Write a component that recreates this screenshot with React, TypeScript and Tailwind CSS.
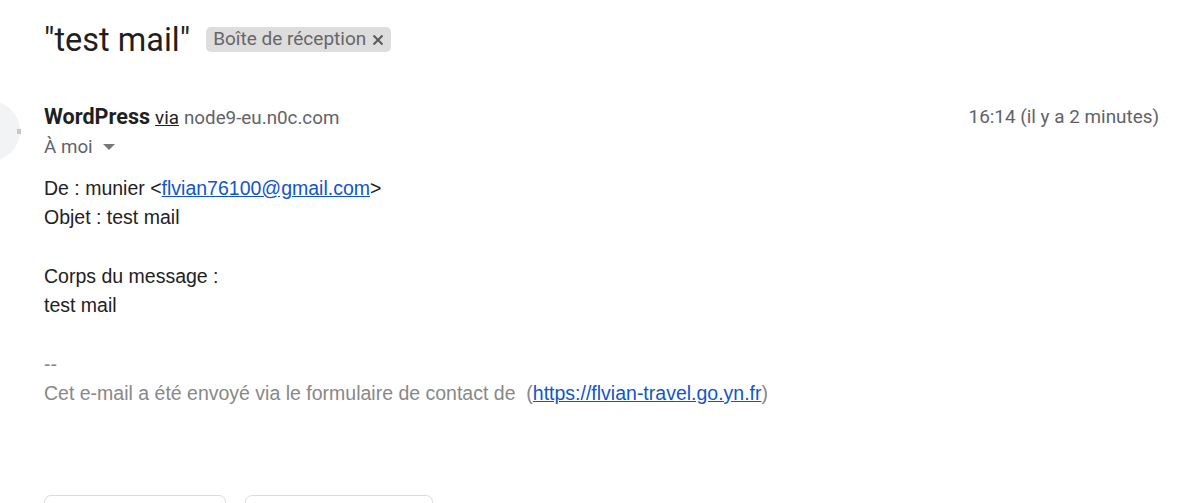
import React from 'react';

export default function App() {
  return (
    <div className="relative h-[503px] w-full overflow-hidden bg-white font-['Roboto',sans-serif]">
      <div className="pl-[44px] pr-[32px] pt-[20px]">
        {/* subject + label */}
        <div className="flex items-center gap-[16px]">
          <h1 className="text-[32.5px] leading-[40px] font-normal text-[#1f1f1f]">"test mail"</h1>
          <span className="mt-[-1px] flex h-[25px] items-center gap-[6px] rounded-[5px] bg-[#dddddd] pl-[7px] pr-[7px] text-[19px] text-[#666666]">
            Boîte de réception
            <svg width="12" height="12" viewBox="0 0 12 12" className="mt-[1px]">
              <path d="M1.5 1.5 L10.5 10.5 M10.5 1.5 L1.5 10.5" stroke="#5a5a5a" strokeWidth="2" />
            </svg>
          </span>
        </div>

        {/* message */}
        <div className="mt-[45px] flex">
          <div className="ml-[-84px] mr-[24px] mt-[-4px] flex h-[60px] w-[60px] shrink-0 items-center justify-end rounded-full bg-[#f1f3f4]">
            <div className="mr-[-1px] h-[5px] w-[4px] bg-[#c8c8c8]" />
          </div>
          <div className="flex-1">
            <div className="flex items-start justify-between">
              <div>
                <div className="flex items-baseline gap-[5px] leading-[24px]">
                  <span className="text-[21.6px] font-bold text-[#1f1f1f]">WordPress</span>
                  <span className="text-[18.8px] text-[#222] underline">via</span>
                  <span className="text-[18.8px] text-[#5f6368]">node9-eu.n0c.com</span>
                </div>
                <div className="mt-[5px] flex items-center gap-[10px] text-[18.8px] leading-[24px] text-[#5f6368]">
                  À moi
                  <svg width="12" height="6" viewBox="0 0 12 6">
                    <path d="M0 0 L12 0 L6 6 Z" fill="#777" />
                  </svg>
                </div>
              </div>
              <span className="text-[18.9px] leading-[24px] text-[#5f6368]">16:14 (il y a 2 minutes)</span>
            </div>

            <div className="mt-[15px] font-['Liberation_Sans',Arial,sans-serif] text-[19.5px] leading-[29.25px] text-[#222222]">
              <div>
                De : munier &lt;<a className="text-[#1155cc] underline">flvian76100@gmail.com</a>&gt;
              </div>
              <div>Objet : test mail</div>
              <div className="h-[29.25px]" />
              <div>Corps du message :</div>
              <div>test mail</div>
              <div className="h-[29.25px]" />
              <div className="text-[#888888]">--</div>
              <div className="whitespace-pre text-[#888888]">
                Cet e-mail a été envoyé via le formulaire de contact de  (
                <a className="text-[#1155cc] underline">https://flvian-travel.go.yn.fr</a>)
              </div>
            </div>

            <div className="mt-[87px] flex gap-[19px]">
              <div className="h-[54px] w-[182px] rounded-[7px] border border-[#dadce0]" />
              <div className="h-[54px] w-[188px] rounded-[7px] border border-[#dadce0]" />
            </div>
          </div>
        </div>
      </div>
    </div>
  );
}
